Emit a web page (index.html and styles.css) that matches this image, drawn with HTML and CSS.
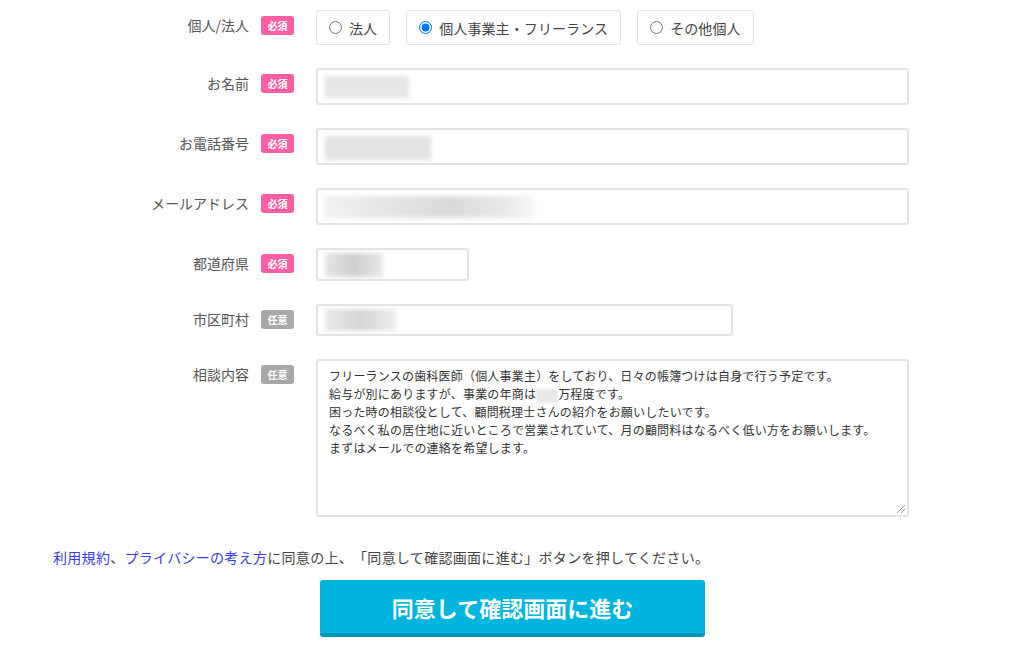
FILE: index.html
```html
<!DOCTYPE html>
<html lang="ja">
<head>
    <meta charset="UTF-8">
    <meta name="viewport" content="width=device-width, initial-scale=1.0">
    <title>お問い合わせフォーム</title>
    <link rel="stylesheet" href="styles.css">
</head>
<body>
    <form class="contact-form">
        <div class="form-row">
            <div class="row-head">
                <span class="row-label">個人/法人</span>
                <span class="badge badge-required">必須</span>
            </div>
            <div class="row-body radio-group">
                <label class="radio-box"><input type="radio" name="type"> 法人</label>
                <label class="radio-box"><input type="radio" name="type" checked> 個人事業主・フリーランス</label>
                <label class="radio-box"><input type="radio" name="type"> その他個人</label>
            </div>
        </div>

        <div class="form-row">
            <div class="row-head">
                <span class="row-label">お名前</span>
                <span class="badge badge-required">必須</span>
            </div>
            <div class="row-body">
                <div class="text-input"><span class="blur blur-name"></span></div>
            </div>
        </div>

        <div class="form-row">
            <div class="row-head">
                <span class="row-label">お電話番号</span>
                <span class="badge badge-required">必須</span>
            </div>
            <div class="row-body">
                <div class="text-input"><span class="blur blur-tel"></span></div>
            </div>
        </div>

        <div class="form-row">
            <div class="row-head">
                <span class="row-label">メールアドレス</span>
                <span class="badge badge-required">必須</span>
            </div>
            <div class="row-body">
                <div class="text-input"><span class="blur blur-mail"></span></div>
            </div>
        </div>

        <div class="form-row">
            <div class="row-head">
                <span class="row-label">都道府県</span>
                <span class="badge badge-required">必須</span>
            </div>
            <div class="row-body">
                <div class="text-input text-input-short"><span class="blur blur-pref"></span></div>
            </div>
        </div>

        <div class="form-row">
            <div class="row-head">
                <span class="row-label">市区町村</span>
                <span class="badge badge-optional">任意</span>
            </div>
            <div class="row-body">
                <div class="text-input text-input-mid"><span class="blur blur-city"></span></div>
            </div>
        </div>

        <div class="form-row">
            <div class="row-head">
                <span class="row-label">相談内容</span>
                <span class="badge badge-optional">任意</span>
            </div>
            <div class="row-body">
                <div class="textarea">
                    <p>フリーランスの歯科医師（個人事業主）をしており、日々の帳簿つけは自身で行う予定です。</p>
                    <p>給与が別にありますが、事業の年商は<span class="blur blur-inline"></span>万程度です。</p>
                    <p>困った時の相談役として、顧問税理士さんの紹介をお願いしたいです。</p>
                    <p>なるべく私の居住地に近いところで営業されていて、月の顧問料はなるべく低い方をお願いします。</p>
                    <p>まずはメールでの連絡を希望します。</p>
                    <svg class="resize-grip" width="10" height="10" viewBox="0 0 10 10">
                        <path d="M9 1 L1 9 M9 5 L5 9" stroke="#a0a0a0" stroke-width="1" fill="none"/>
                    </svg>
                </div>
            </div>
        </div>

        <p class="agree-text">
            <a href="#">利用規約</a>、<a href="#">プライバシーの考え方</a>に同意の上、「同意して確認画面に進む」ボタンを押してください。
        </p>

        <div class="submit-wrap">
            <button type="button" class="submit-btn">同意して確認画面に進む</button>
        </div>
    </form>
</body>
</html>
```

FILE: styles.css
```css
body {
    margin: 0;
    background: #fff;
    font-family: "Noto Sans CJK JP", "Noto Sans", sans-serif;
    color: #444;
    text-spacing-trim: space-all;
}

.contact-form {
    width: 1024px;
    padding-top: 10px;
}

.form-row {
    display: flex;
    align-items: flex-start;
    margin-bottom: 23px;
}

.row-head {
    width: 294px;
    display: flex;
    justify-content: flex-end;
    align-items: center;
    gap: 12px;
    padding-top: 6px;
}

.row-label {
    font-size: 14px;
    line-height: 19px;
    color: #555;
}

.badge {
    display: inline-block;
    width: 33px;
    height: 19px;
    line-height: 19px;
    border-radius: 3px;
    color: #fff;
    font-size: 10px;
    font-weight: bold;
    text-align: center;
}

.badge-required {
    background: #ff5ea2;
}

.badge-optional {
    background: #a8a8a8;
}

.row-body {
    margin-left: 22px;
}

/* radios */
.radio-group {
    display: flex;
    gap: 16px;
}

.radio-box {
    display: flex;
    align-items: center;
    gap: 7px;
    height: 33px;
    padding: 0 12px;
    border: 1px solid #e3e3e3;
    border-radius: 3px;
    font-size: 14px;
    letter-spacing: 0.1px;
    color: #444;
}

.radio-box input {
    margin: 0;
    width: 13px;
    height: 13px;
}

/* text inputs */
.text-input {
    box-sizing: border-box;
    width: 593px;
    height: 37px;
    border: 2px solid #e4e4e4;
    border-radius: 3px;
    padding: 6px 7px;
}

.text-input-short {
    width: 153px;
    height: 33px;
    padding: 3px 7px;
}

.text-input-mid {
    width: 417px;
    height: 32px;
    padding: 3px 7px;
}

.blur {
    display: block;
    height: 22px;
    background: #e2e2e2;
    filter: blur(2px);
}

.blur-name {
    width: 84px;
    background: #e6e6e6;
}

.blur-tel {
    width: 106px;
    height: 24px;
}

.blur-mail {
    width: 209px;
    background: linear-gradient(90deg, #f2f2f2, #e4e4e4 30%, #dadada 60%, #e8e8e8 85%, #f6f6f6);
}

.blur-pref {
    width: 58px;
    height: 24px;
    background: linear-gradient(90deg, #e4e4e4, #cfcfcf 50%, #e8e8e8);
}

.blur-city {
    width: 71px;
    background: linear-gradient(90deg, #e8e8e8, #d6d6d6 50%, #ececec);
}

.blur-inline {
    display: inline-block;
    width: 22px;
    height: 14px;
    vertical-align: middle;
    background: #e8e8e8;
    filter: blur(1px);
}

/* textarea */
.textarea {
    position: relative;
    box-sizing: border-box;
    width: 593px;
    height: 158px;
    border: 2px solid #e4e4e4;
    border-radius: 3px;
    padding: 6px 11px;
    font-size: 12px;
    line-height: 18px;
    letter-spacing: 0.2px;
    color: #333;
}

.textarea p {
    margin: 0;
}

.resize-grip {
    position: absolute;
    right: 1px;
    bottom: 1px;
}

/* agreement + submit */
.agree-text {
    margin: 30px 0 0 53px;
    font-size: 14px;
    line-height: 20px;
    letter-spacing: 0.3px;
    color: #444;
}

.agree-text a {
    color: #3a3ae6;
    text-decoration: none;
}

.submit-wrap {
    margin: 13px 0 0 320px;
}

.submit-btn {
    width: 385px;
    height: 57px;
    border: none;
    border-bottom: 4px solid #0098b8;
    border-radius: 3px;
    background: #00b5dd;
    color: #fff;
    font-family: "Noto Sans CJK JP", sans-serif;
    font-size: 22px;
    font-weight: bold;
    padding: 0;
    cursor: pointer;
}
```
